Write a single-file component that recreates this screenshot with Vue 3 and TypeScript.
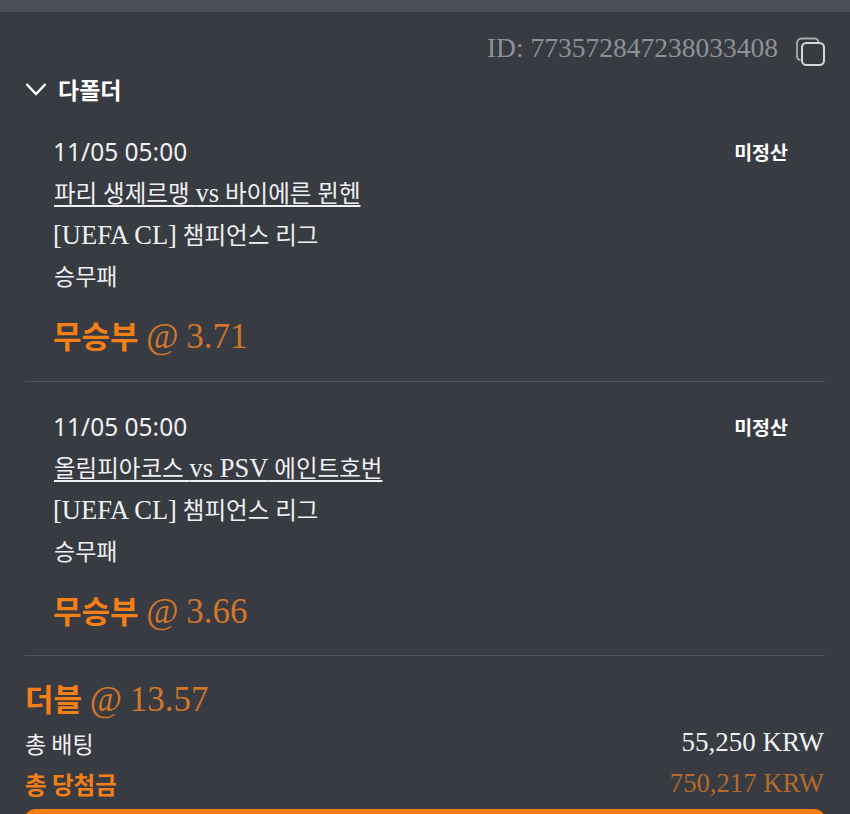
<template>
  <div class="page">
    <div class="top-strip"></div>
    <div class="card">
      <div class="id-row">
        <span class="id-text">ID: {{ betId }}</span>
        <svg class="copy-icon" width="30" height="30" viewBox="0 0 30 30" fill="none">
          <path d="M5.5 23 A4 4 0 0 1 2 19 V6 A4.5 4.5 0 0 1 6.500 1.500 H19 A4 4 0 0 1 23.500 5" stroke="#a9acb1" stroke-width="1.800" />
          <rect x="7" y="6" width="22" height="22" rx="4.500" stroke="#d5d7da" stroke-width="2" />
        </svg>
      </div>
      <div class="folder-title">
        <svg width="22" height="14" viewBox="0 0 22 14" fill="none">
          <path d="M1.500 2 L11 12 L20.500 2" stroke="#fff" stroke-width="2.500" />
        </svg>
        <span>다폴더</span>
      </div>
      <div v-for="(bet, i) in bets" :key="i" class="bet">
        <div class="bet-head">
          <span class="bet-date">{{ bet.date }}</span>
          <span class="bet-status">미정산</span>
        </div>
        <div class="bet-match">
          <span v-for="(part, j) in splitLatin(bet.match)" :key="j" :class="{ latin: j % 2 === 1 }">{{ part }}</span>
        </div>
        <div class="bet-league">
          <span v-for="(part, j) in splitLatin(bet.league)" :key="j" :class="{ latin: j % 2 === 1 }">{{ part }}</span>
        </div>
        <div class="bet-market">승무패</div>
        <div class="bet-pick"><b>무승부</b> @ {{ bet.odds }}</div>
      </div>
      <div class="summary">
        <div class="summary-title"><b>더블</b> @ 13.57</div>
        <div class="summary-row">
          <span>총 배팅</span>
          <span class="amount">55,250 KRW</span>
        </div>
        <div class="summary-row win">
          <b>총 당첨금</b>
          <span class="amount">750,217 KRW</span>
        </div>
      </div>
      <div class="action-bar"></div>
    </div>
  </div>
</template>

<script setup lang="ts">
interface Bet {
  date: string
  match: string
  league: string
  odds: string
}

const betId = '773572847238033408'

const bets: Bet[] = [
  {
    date: '11/05 05:00',
    match: '파리 생제르맹 vs 바이에른 뮌헨',
    league: '[UEFA CL] 챔피언스 리그',
    odds: '3.71'
  },
  {
    date: '11/05 05:00',
    match: '올림피아코스 vs PSV 에인트호번',
    league: '[UEFA CL] 챔피언스 리그',
    odds: '3.66'
  }
]

// latin runs sit at odd indexes, they are drawn a bit larger than the hangul
const splitLatin = (text: string) => text.split(/([A-Za-z[\]][A-Za-z[\] ]*[A-Za-z\]])/)
</script>

<style>
html, body {
  margin: 0;
  background: #383b42;
}
</style>

<style scoped>
.page {
  width: 850px;
  height: 814px;
  overflow: hidden;
  background: #383b42;
  color: #eff0f2;
  font-family: "Liberation Serif", "Noto Sans CJK KR", serif;
}

.top-strip {
  height: 12px;
  background: #4b5058;
}

.card {
  padding: 15px 25px 0;
}

.id-row {
  display: flex;
  justify-content: flex-end;
  align-items: center;
  gap: 17px;
  height: 42px;
  margin-bottom: 3px;
}

.id-text {
  color: #8d9197;
  font-size: 27.500px;
  line-height: 42px;
}

.copy-icon {
  margin-top: 7px;
}

.folder-title {
  display: flex;
  align-items: center;
  gap: 11px;
  height: 34px;
  margin-bottom: 1px;
  font-family: "Noto Sans CJK KR", sans-serif;
  font-size: 23px;
  font-weight: 700;
  color: #fff;
}

.bet {
  padding: 23px 37px 21px 28px;
  border-bottom: 1px solid #50535a;
}

.folder-title + .bet {
  padding-bottom: 22px;
}

.bet-head {
  display: flex;
  justify-content: space-between;
  align-items: center;
  height: 42px;
}

.bet-date {
  font-family: "Noto Sans", sans-serif;
  font-size: 24.500px;
}

.bet-status {
  font-family: "Noto Sans CJK KR", sans-serif;
  font-size: 19.500px;
  font-weight: 700;
  color: #fff;
}

.bet-match,
.bet-league {
  height: 42px;
  line-height: 42px;
  font-size: 23.500px;
  white-space: nowrap;
}

.bet-match {
  margin-left: 1px;
  text-decoration: underline;
  text-decoration-thickness: 2px;
  text-underline-offset: 3px;
  text-decoration-skip-ink: none;
}

.latin {
  font-size: 26.500px;
}

.bet-market {
  height: 42px;
  margin-left: 1px;
  line-height: 38px;
  font-family: "Noto Sans CJK KR", sans-serif;
  font-size: 23px;
}

.bet-pick {
  margin-top: 13px;
  height: 48px;
  line-height: 48px;
  font-size: 35px;
  word-spacing: -1px;
  color: #d2762a;
}

.bet-pick b,
.summary-title b {
  font-family: "Noto Sans CJK KR", sans-serif;
  font-size: 31px;
  color: #f57f17;
}

.summary {
  padding-top: 18px;
}

.summary-title {
  height: 48px;
  line-height: 48px;
  font-size: 35px;
  word-spacing: -1px;
  color: #d2762a;
}

.summary-row {
  display: flex;
  justify-content: space-between;
  align-items: center;
  height: 41px;
  font-family: "Noto Sans CJK KR", sans-serif;
  font-size: 23px;
}

.amount {
  padding-right: 1px;
  font-family: "Liberation Serif", serif;
  font-size: 27px;
}

.win {
  color: #f57f17;
}

.win b {
  font-size: 23.500px;
}

.win .amount {
  font-size: 26.700px;
  color: #b46a29;
}

.action-bar {
  height: 40px;
  margin-top: 5px;
  border-radius: 10px;
  background: #f57c0d;
}
</style>
